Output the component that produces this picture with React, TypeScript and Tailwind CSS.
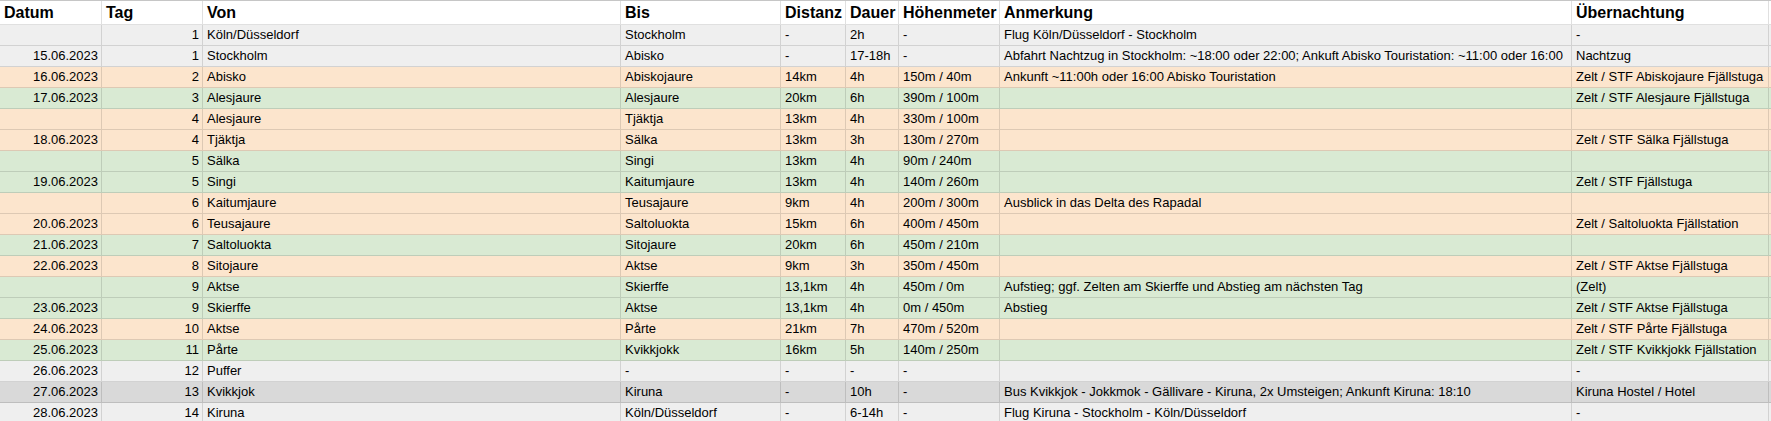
import React from 'react';

type Row = {
  datum: string;
  tag: string;
  von: string;
  bis: string;
  distanz: string;
  dauer: string;
  hm: string;
  anmerkung: string;
  nacht: string;
  tone: 'gray' | 'dark' | 'orange' | 'green';
};

const tones: Record<Row['tone'], string> = {
  gray: 'bg-[#efefef]',
  dark: 'bg-[#d9d9d9]',
  orange: 'bg-[#fce5cd]',
  green: 'bg-[#d9ead3]',
};

const rows: Row[] = [
  { datum: '', tag: '1', von: 'Köln/Düsseldorf', bis: 'Stockholm', distanz: '-', dauer: '2h', hm: '-', anmerkung: 'Flug Köln/Düsseldorf - Stockholm', nacht: '-', tone: 'gray' },
  { datum: '15.06.2023', tag: '1', von: 'Stockholm', bis: 'Abisko', distanz: '-', dauer: '17-18h', hm: '-', anmerkung: 'Abfahrt Nachtzug in Stockholm: ~18:00 oder 22:00; Ankuft Abisko Touristation: ~11:00 oder 16:00', nacht: 'Nachtzug', tone: 'gray' },
  { datum: '16.06.2023', tag: '2', von: 'Abisko', bis: 'Abiskojaure', distanz: '14km', dauer: '4h', hm: '150m / 40m', anmerkung: 'Ankunft ~11:00h oder 16:00 Abisko Touristation', nacht: 'Zelt / STF Abiskojaure Fjällstuga', tone: 'orange' },
  { datum: '17.06.2023', tag: '3', von: 'Alesjaure', bis: 'Alesjaure', distanz: '20km', dauer: '6h', hm: '390m / 100m', anmerkung: '', nacht: 'Zelt / STF Alesjaure Fjällstuga', tone: 'green' },
  { datum: '', tag: '4', von: 'Alesjaure', bis: 'Tjäktja', distanz: '13km', dauer: '4h', hm: '330m / 100m', anmerkung: '', nacht: '', tone: 'orange' },
  { datum: '18.06.2023', tag: '4', von: 'Tjäktja', bis: 'Sälka', distanz: '13km', dauer: '3h', hm: '130m / 270m', anmerkung: '', nacht: 'Zelt / STF Sälka Fjällstuga', tone: 'orange' },
  { datum: '', tag: '5', von: 'Sälka', bis: 'Singi', distanz: '13km', dauer: '4h', hm: '90m / 240m', anmerkung: '', nacht: '', tone: 'green' },
  { datum: '19.06.2023', tag: '5', von: 'Singi', bis: 'Kaitumjaure', distanz: '13km', dauer: '4h', hm: '140m / 260m', anmerkung: '', nacht: 'Zelt / STF Fjällstuga', tone: 'green' },
  { datum: '', tag: '6', von: 'Kaitumjaure', bis: 'Teusajaure', distanz: '9km', dauer: '4h', hm: '200m / 300m', anmerkung: 'Ausblick in das Delta des Rapadal', nacht: '', tone: 'orange' },
  { datum: '20.06.2023', tag: '6', von: 'Teusajaure', bis: 'Saltoluokta', distanz: '15km', dauer: '6h', hm: '400m / 450m', anmerkung: '', nacht: 'Zelt / Saltoluokta Fjällstation', tone: 'orange' },
  { datum: '21.06.2023', tag: '7', von: 'Saltoluokta', bis: 'Sitojaure', distanz: '20km', dauer: '6h', hm: '450m / 210m', anmerkung: '', nacht: '', tone: 'green' },
  { datum: '22.06.2023', tag: '8', von: 'Sitojaure', bis: 'Aktse', distanz: '9km', dauer: '3h', hm: '350m / 450m', anmerkung: '', nacht: 'Zelt / STF Aktse Fjällstuga', tone: 'orange' },
  { datum: '', tag: '9', von: 'Aktse', bis: 'Skierffe', distanz: '13,1km', dauer: '4h', hm: '450m / 0m', anmerkung: 'Aufstieg; ggf. Zelten am Skierffe und Abstieg am nächsten Tag', nacht: '(Zelt)', tone: 'green' },
  { datum: '23.06.2023', tag: '9', von: 'Skierffe', bis: 'Aktse', distanz: '13,1km', dauer: '4h', hm: '0m / 450m', anmerkung: 'Abstieg', nacht: 'Zelt / STF Aktse Fjällstuga', tone: 'green' },
  { datum: '24.06.2023', tag: '10', von: 'Aktse', bis: 'Pårte', distanz: '21km', dauer: '7h', hm: '470m / 520m', anmerkung: '', nacht: 'Zelt / STF Pårte Fjällstuga', tone: 'orange' },
  { datum: '25.06.2023', tag: '11', von: 'Pårte', bis: 'Kvikkjokk', distanz: '16km', dauer: '5h', hm: '140m / 250m', anmerkung: '', nacht: 'Zelt / STF Kvikkjokk Fjällstation', tone: 'green' },
  { datum: '26.06.2023', tag: '12', von: 'Puffer', bis: '-', distanz: '-', dauer: '-', hm: '-', anmerkung: '', nacht: '-', tone: 'gray' },
  { datum: '27.06.2023', tag: '13', von: 'Kvikkjok', bis: 'Kiruna', distanz: '-', dauer: '10h', hm: '-', anmerkung: 'Bus Kvikkjok - Jokkmok - Gällivare - Kiruna, 2x Umsteigen; Ankunft Kiruna: 18:10', nacht: 'Kiruna Hostel / Hotel', tone: 'dark' },
  { datum: '28.06.2023', tag: '14', von: 'Kiruna', bis: 'Köln/Düsseldorf', distanz: '-', dauer: '6-14h', hm: '-', anmerkung: 'Flug Kiruna - Stockholm - Köln/Düsseldorf', nacht: '-', tone: 'gray' },
];

const headers = ['Datum', 'Tag', 'Von', 'Bis', 'Distanz', 'Dauer', 'Höhenmeter', 'Anmerkung', 'Übernachtung'];

const cols = 'grid grid-cols-[102px_101px_418px_160px_65px_53px_101px_572px_197px_1fr]';

function Cell({ children, right }: { children?: React.ReactNode; right?: boolean }) {
  return (
    <div
      className={`h-[21px] border-r border-b border-black/[0.12] px-[4px] overflow-hidden whitespace-nowrap text-[13px] leading-[20px] text-black ${
        right ? 'text-right pr-[3px]' : ''
      }`}
    >
      {children}
    </div>
  );
}

export default function App() {
  return (
    <div className="w-[1771px] h-[421px] overflow-hidden bg-white font-['Liberation_Sans',Arial,sans-serif]">
      <div className="border-t border-[#c6c6c6]">
        <div className={cols}>
          {headers.map((h) => (
            <div
              key={h}
              className="h-[24px] border-r border-b border-black/[0.12] px-[4px] whitespace-nowrap overflow-hidden text-[16px] font-bold leading-[23px] text-black"
            >
              {h}
            </div>
          ))}
          <div className="h-[24px] border-b border-black/[0.12]" />
        </div>

        {rows.map((r, i) => (
          <div key={i} className={`${cols} ${tones[r.tone]}`}>
            <Cell right>{r.datum}</Cell>
            <Cell right>{r.tag}</Cell>
            <Cell>{r.von}</Cell>
            <Cell>{r.bis}</Cell>
            <Cell>{r.distanz}</Cell>
            <Cell>{r.dauer}</Cell>
            <Cell>{r.hm}</Cell>
            <Cell>{r.anmerkung}</Cell>
            <Cell>{r.nacht}</Cell>
            <div className="h-[21px] border-b border-black/[0.12]" />
          </div>
        ))}
      </div>
    </div>
  );
}
